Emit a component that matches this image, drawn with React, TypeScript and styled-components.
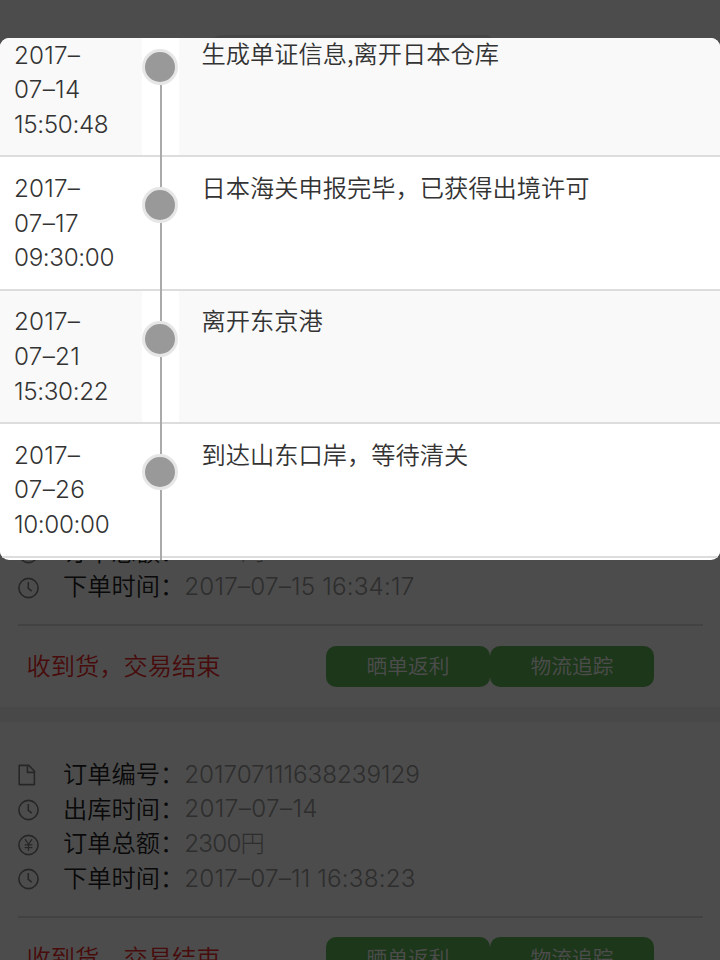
import React from "react";
import styled, { createGlobalStyle } from "styled-components";

const GlobalStyle = createGlobalStyle`
  *, *::before, *::after { box-sizing: border-box; }
  html, body { margin: 0; padding: 0; overflow: hidden; }
  body {
    font-family: "Noto Sans CJK SC", "Noto Sans", sans-serif;
    font-size: 24.25px;
    line-height: 34.7px;
    font-weight: 350;
    color: #333;
  }
`;

const Screen = styled.div`
  position: relative;
  width: 720px;
  height: 960px;
  overflow: hidden;
  background: #f0f0f0;
`;

const OrderCard = styled.section<{ $height: number; $end?: boolean }>`
  display: flex;
  flex-direction: column;
  justify-content: ${(p) => (p.$end ? "flex-end" : "flex-start")};
  height: ${(p) => p.$height}px;
  padding: ${(p) => (p.$end ? "0" : "35px")} 17.5px 0;
  margin-bottom: 15.5px;
  background: #fff;
`;

const SearchPill = styled.div`
  flex: none;
  width: 284px;
  height: 40px;
  margin: 35px 0 auto 193px;
  border-radius: 10px;
  background: #e6e6e6;
`;

const InfoRow = styled.div`
  display: flex;
  align-items: center;
  height: 34.7px;
  white-space: nowrap;
`;

const IconSlot = styled.span`
  display: flex;
  width: 45.6px;
  padding-top: 2px;
  color: #808080;
`;

const Label = styled.span`
  width: 121.2px;
  padding-bottom: 2px;
  color: #222;
`;

const Digits = styled.span<{ $spacing?: number }>`
  font-family: Inter, "Noto Sans CJK SC", sans-serif;
  font-weight: 300;
  letter-spacing: ${(p) => p.$spacing ?? -0.3}px;
`;

const Value = styled(Digits)`
  padding-top: 1px;
  color: #999;
`;

const CardFooter = styled.footer`
  display: flex;
  align-items: center;
  height: 82.5px;
  flex: none;
  margin-top: 20px;
  border-top: 2px solid #dcdcdc;
`;

const Status = styled.span`
  width: 308.5px;
  padding: 0 0 2px 9px;
  color: #f02a2a;
`;

const ActionButton = styled.button`
  width: 164px;
  height: 41.5px;
  padding: 0 0 2px;
  border: 0;
  border-radius: 10px;
  background: #60b855;
  color: #fff;
  font: inherit;
  font-size: 20.7px;
  line-height: 39px;
`;

const Overlay = styled.div`
  position: absolute;
  inset: 0;
  padding-top: 38.4px;
  background: rgba(0, 0, 0, 0.7);
`;

const Dialog = styled.div`
  height: 521.6px;
  overflow: hidden;
  border-radius: 9px;
  background: #fff;
`;

const Timeline = styled.div`
  margin-top: -14.4px;
`;

const Event = styled.div<{ $striped: boolean }>`
  display: flex;
  height: 133.4px;
  border-bottom: 2px solid #ddd;
  background: ${(p) => (p.$striped ? "#f9f9f9" : "#fff")};
`;

const EventTime = styled.div`
  display: flex;
  flex-direction: column;
  width: 142px;
  padding: 14.6px 0 0 14px;
`;

const Rail = styled.div`
  display: flex;
  flex-direction: column;
  align-items: center;
  width: 37px;
  margin-bottom: -2px;
  background: linear-gradient(#fff, #fff) 0 0 / 100% calc(100% - 2px) no-repeat;
`;

const RailEnd = styled.i`
  display: block;
  width: 2px;
  height: 6px;
  margin-left: 160px;
  background: #aaa;
`;

const RailLine = styled.i<{ $height?: number; $hidden?: boolean }>`
  width: 2px;
  ${(p) => (p.$height ? `height: ${p.$height}px;` : "flex: 1;")}
  background: ${(p) => (p.$hidden ? "transparent" : "#aaa")};
`;

const Dot = styled.i`
  width: 36px;
  height: 36px;
  flex: none;
  margin-right: 1px;
  border: 3px solid #e6e6e6;
  border-radius: 50%;
  background: #999;
`;

const EventText = styled.div`
  padding: 12.4px 0 0 22.5px;
  white-space: nowrap;
`;

const ClockIcon = () => (
  <svg width="22" height="22" viewBox="0 0 22 22" fill="none" stroke="currentColor" strokeWidth="1.6">
    <circle cx="10.5" cy="11" r="9.6" />
    <path d="M10.3 5v6.4l3.4 2.8" />
  </svg>
);

const YenIcon = () => (
  <svg width="22" height="22" viewBox="0 0 22 22" fill="none" stroke="currentColor" strokeWidth="1.6">
    <circle cx="10.5" cy="11" r="9.6" />
    <path d="M7 5.2l3.5 5.3L14 5.2M10.5 10.5V17M6.6 10.8h7.8M6.6 13.6h7.8" strokeWidth="1.2" />
  </svg>
);

const FileIcon = () => (
  <svg width="22" height="22" viewBox="0 0 22 22" fill="none" stroke="currentColor" strokeWidth="1.6" strokeLinejoin="round">
    <path d="M1.2 1.4h9.6l5.6 5.6v13.6H1.2zM9.4 1.4v7h7" />
  </svg>
);

const icons = { clock: ClockIcon, yen: YenIcon, file: FileIcon };

type InfoProps = { icon: keyof typeof icons; label: string; value: string; spacing?: number };

const Info = ({ icon, label, value, spacing }: InfoProps) => {
  const Icon = icons[icon];
  return (
    <InfoRow>
      <IconSlot><Icon /></IconSlot>
      <Label>{label}</Label>
      <Value $spacing={spacing}>{value}</Value>
    </InfoRow>
  );
};

const Footer = () => (
  <CardFooter>
    <Status>收到货，交易结束</Status>
    <ActionButton>晒单返利</ActionButton>
    <ActionButton>物流追踪</ActionButton>
  </CardFooter>
);

const events = [
  { time: ["2017–", "07–14", "15:50:48"], text: "生成单证信息,离开日本仓库" },
  { time: ["2017–", "07–17", "09:30:00"], text: "日本海关申报完毕，已获得出境许可" },
  { time: ["2017–", "07–21", "15:30:22"], text: "离开东京港" },
  { time: ["2017–", "07–26", "10:00:00"], text: "到达山东口岸，等待清关" },
];

export default function App() {
  return (
    <Screen>
      <GlobalStyle />
      <OrderCard $height={706.5} $end>
        <SearchPill />
        <Info icon="yen" label="订单总额：" value="2300円" spacing={-0.9} />
        <Info icon="clock" label="下单时间：" value="2017–07–15 16:34:17" spacing={0.17} />
        <Footer />
      </OrderCard>
      <OrderCard $height={300}>
        <Info icon="file" label="订单编号：" value="201707111638239129" spacing={-0.06} />
        <Info icon="clock" label="出库时间：" value="2017–07–14" spacing={0.35} />
        <Info icon="yen" label="订单总额：" value="2300円" spacing={-0.8} />
        <Info icon="clock" label="下单时间：" value="2017–07–11 16:38:23" spacing={0.17} />
        <Footer />
      </OrderCard>
      <Overlay>
        <Dialog>
          <Timeline>
            {events.map((e, i) => (
              <Event key={e.text} $striped={i % 2 === 0}>
                <EventTime>
                  <Digits $spacing={0.2}>{e.time[0]}</Digits>
                  <Digits $spacing={0.3}>{e.time[1]}</Digits>
                  <Digits $spacing={-0.35}>{e.time[2]}</Digits>
                </EventTime>
                <Rail>
                  <RailLine $height={i === 0 ? 25 : 30} $hidden={i === 0} />
                  <Dot />
                  <RailLine />
                </Rail>
                <EventText>{e.text}</EventText>
              </Event>
            ))}
            <RailEnd />
          </Timeline>
        </Dialog>
      </Overlay>
    </Screen>
  );
}
